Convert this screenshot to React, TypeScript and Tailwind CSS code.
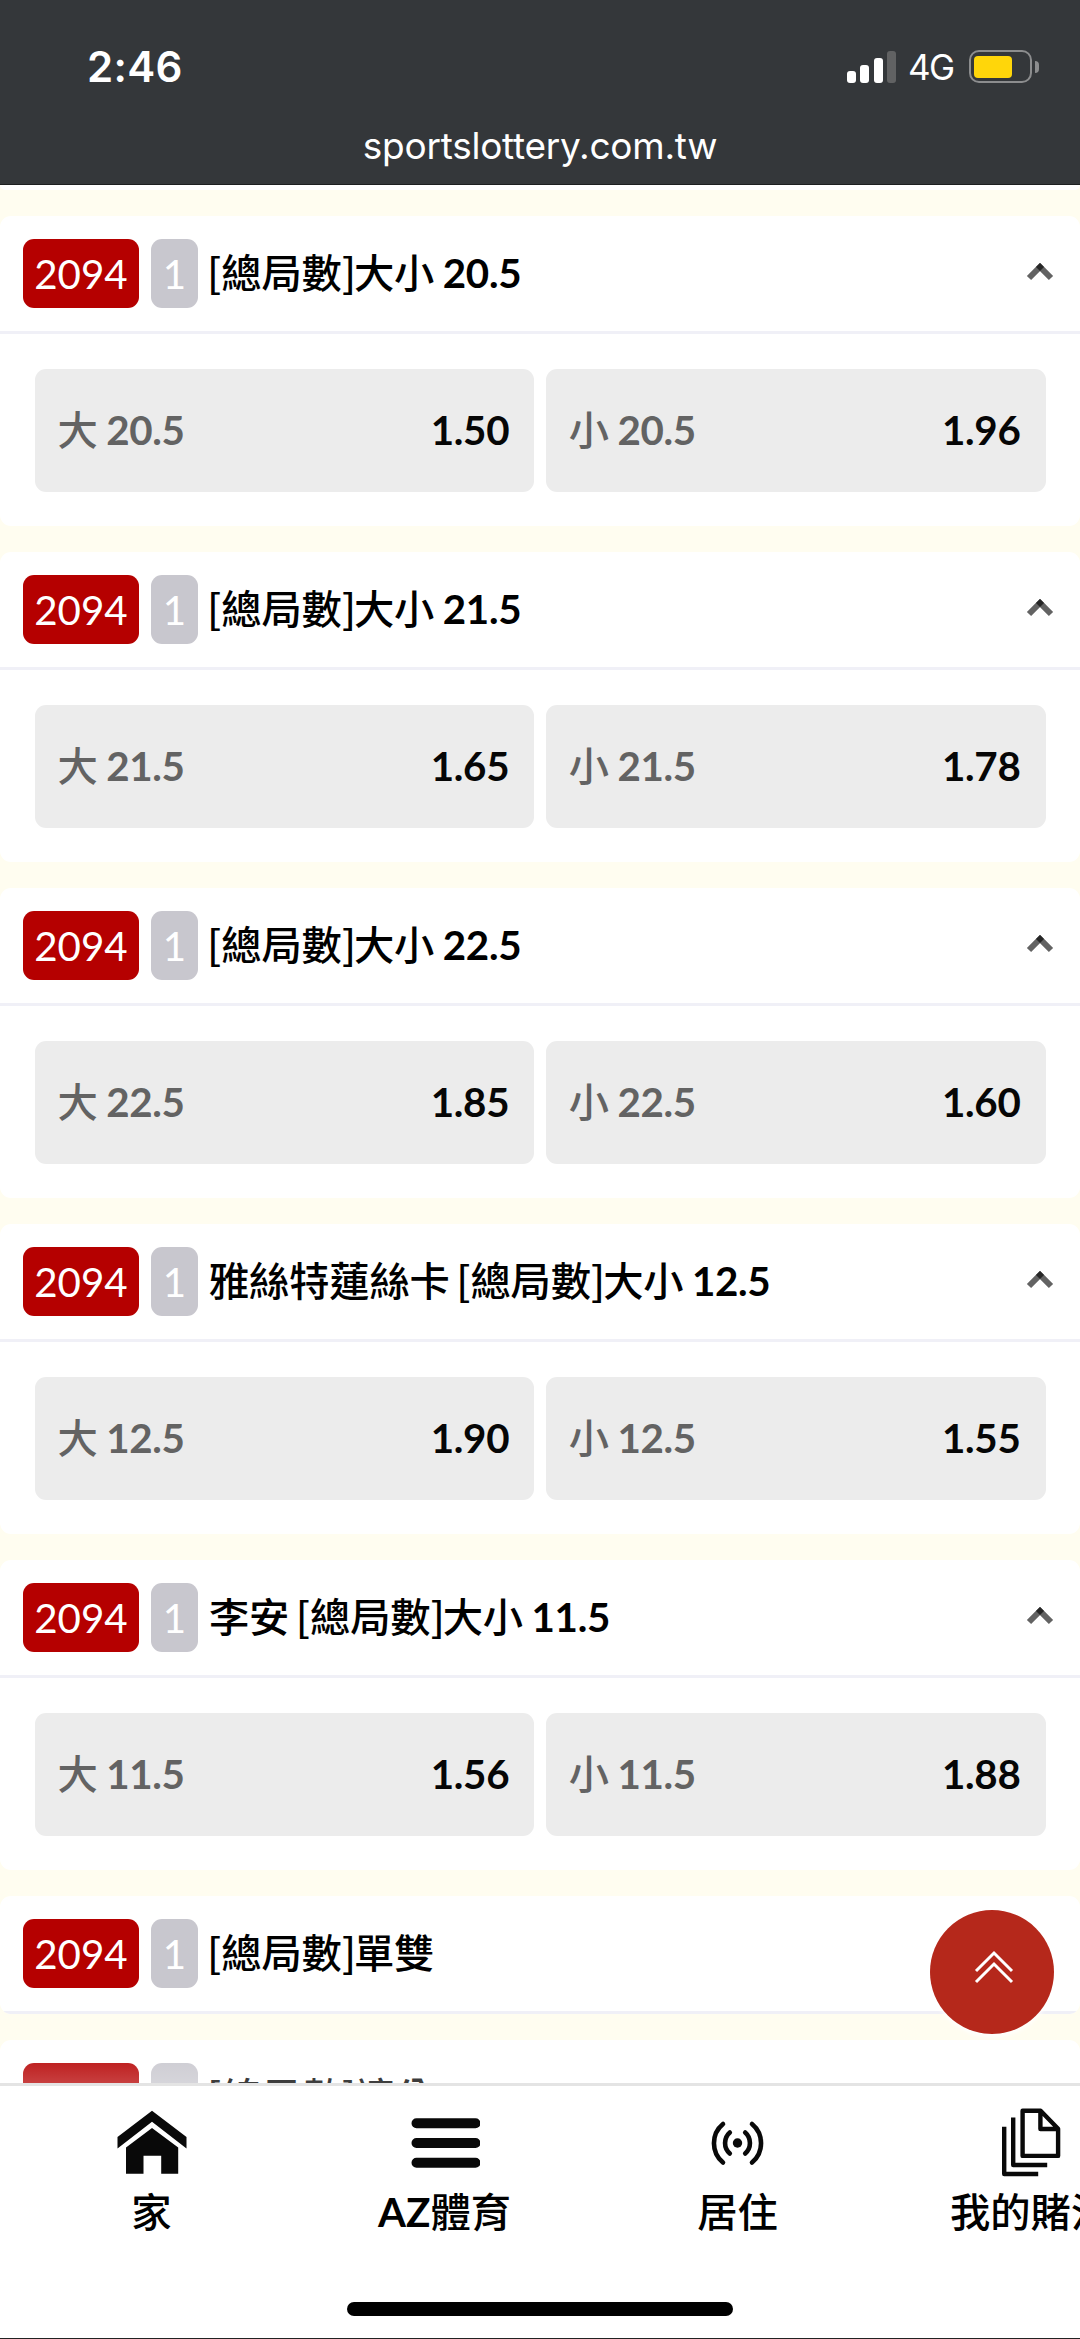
import React from "react";

const markets = [
  { title: "[總局數]大小 20.5", line: "20.5", over: "1.50", under: "1.96" },
  { title: "[總局數]大小 21.5", line: "21.5", over: "1.65", under: "1.78" },
  { title: "[總局數]大小 22.5", line: "22.5", over: "1.85", under: "1.60" },
  { title: "雅絲特蓮絲卡 [總局數]大小 12.5", line: "12.5", over: "1.90", under: "1.55" },
  { title: "李安 [總局數]大小 11.5", line: "11.5", over: "1.56", under: "1.88" },
];

function StatusBar() {
  return (
    <header className="flex h-[185px] shrink-0 flex-col border-b border-[#1d1f20] bg-[#34373a] font-['Inter','Liberation_Sans',sans-serif] text-white">
      <div className="flex h-[120px] items-center justify-between pt-[13px] pr-[41px] pl-[87px]">
        <span className="text-[42px] leading-none font-semibold tracking-[0.3px]">2:46</span>
        <div className="flex items-center">
          <div className="flex h-[32px] items-end gap-[4.5px]">
            <i className="h-[12px] w-[9px] rounded-[3px] bg-white" />
            <i className="h-[18px] w-[9px] rounded-[3px] bg-white" />
            <i className="h-[25px] w-[9px] rounded-[3px] bg-white" />
            <i className="h-[32px] w-[9px] rounded-[3px] bg-[#616263]" />
          </div>
          <span className="mt-[2px] ml-[12px] w-[47px] text-[35px] leading-none tracking-[-1.5px] whitespace-nowrap">4G</span>
          <div className="ml-[14px] flex h-[33px] w-[63px] items-center rounded-[10px] border-[2.5px] border-[#8c8d8e] px-[3px]">
            <i className="h-[22px] w-[38px] rounded-[4px] bg-[#ffd60a]" />
          </div>
          <i className="ml-[3px] h-[12px] w-[4px] rounded-r-full bg-[#8c8d8e]" />
        </div>
      </div>
      <div className="flex h-[50px] items-center justify-center text-[37px] leading-none tracking-[-0.25px]">sportslottery.com.tw</div>
    </header>
  );
}

function MarketHead({ title, chevron }: { title: string; chevron?: boolean }) {
  return (
    <div className="flex h-[118.5px] items-center border-b-3 border-[#f0f0f7] px-[23px]">
      <span className="flex h-[69px] w-[116px] items-center justify-center rounded-[11px] bg-[#b50000] pt-px text-white">2094</span>
      <span className="ml-3 flex h-[69px] w-[47px] items-center justify-center rounded-[11px] bg-[#c8c7ce] pt-px text-white">1</span>
      <span className="-mt-[3px] ml-[11px] whitespace-pre text-black">
        <Mixed text={title} />
      </span>
      {chevron && (
        <svg className="mt-[-3px] mr-[3px] ml-auto" width="28" height="18" viewBox="0 0 28 18" fill="none">
          <path d="M3 15 14 4l11 11" stroke="#636363" strokeWidth="6" />
          <path d="m14 0 4 4-4 4-4-4z" fill="#262626" />
        </svg>
      )}
    </div>
  );
}

/* Latin runs are bold Lato, Han runs medium; brackets and spaces are set tight. */
function Mixed({ text }: { text: string }) {
  return (
    <>
      {text.split(/([-\d.]+|[[\]]| )/).map((part, i) => {
        if (/[\d]/.test(part)) return <b key={i} className="font-bold tracking-[-0.3px]">{part}</b>;
        if (part === " ") return <span key={i} className="tracking-[-1.8px]"> </span>;
        if (part === "[") return <span key={i} className="-ml-[2px] font-['Noto_Sans_CJK_TC',sans-serif] font-medium">[</span>;
        if (part === "]") return <span key={i} className="-mr-[2px] font-['Noto_Sans_CJK_TC',sans-serif] font-medium">]</span>;
        return <span key={i} className="font-['Noto_Sans_CJK_TC',sans-serif] font-medium tracking-[-0.2px]">{part}</span>;
      })}
    </>
  );
}

function Odds({ side, line, price }: { side: string; line: string; price: string }) {
  return (
    <button className="flex h-[123px] flex-1 items-center justify-between rounded-[11px] bg-[#ececec] pr-[25px] pl-[23px] whitespace-pre">
      <span className="-mt-[2px] text-[#636363]">
        <Mixed text={side + " " + line} />
      </span>
      <b className="tracking-[-0.3px] text-[#060606]">{price}</b>
    </button>
  );
}

function NavItem({ label, icon }: { label: React.ReactNode; icon: React.ReactNode }) {
  return (
    <div className="flex w-[293px] shrink-0 flex-col items-center">
      <div className="flex h-[70px] w-[70px] items-center justify-center">{icon}</div>
      <span className="mt-[3px] h-[60px] font-['Lato','Noto_Sans_CJK_TC',sans-serif] leading-[60px] font-medium whitespace-nowrap text-black">
        {label}
      </span>
    </div>
  );
}

export default function App() {
  return (
    <div className="flex h-[2339px] w-[1080px] flex-col overflow-hidden bg-[#fffdf0] font-['Lato','Noto_Sans_CJK_TC',sans-serif] text-[40.3px] leading-none">
      <StatusBar />
      <main className="relative flex h-[1897.5px] shrink-0 flex-col gap-[26px] overflow-hidden">
        <div className="h-[4.5px] shrink-0 rounded-b-[11px] bg-white" />
        {markets.map((m) => (
          <section key={m.title} className="h-[310px] shrink-0 overflow-hidden rounded-[11px] bg-white">
            <MarketHead title={m.title} chevron />
            <div className="flex gap-[11.5px] px-[34.5px] pt-[35px]">
              <Odds side="大" line={m.line} price={m.over} />
              <Odds side="小" line={m.line} price={m.under} />
            </div>
          </section>
        ))}
        <section className="shrink-0 overflow-hidden rounded-[11px] bg-white">
          <MarketHead title="[總局數]單雙" />
        </section>
        <section className="shrink-0 overflow-hidden rounded-[11px] bg-white">
          <MarketHead title="[總局數]讓分 -1.5" />
        </section>
        <div className="absolute inset-x-0 bottom-0 h-[42px] bg-linear-to-b from-white/0 to-white/25" />
        <button className="absolute right-[26px] bottom-[49px] flex size-[124px] items-center justify-center rounded-full bg-[#b5281b] shadow-[0_3px_4px_rgba(255,255,255,0.9)]">
          <svg className="-mt-[10px] ml-[3px]" width="40" height="34" viewBox="0 0 40 34" fill="none" stroke="#fff" strokeWidth="3">
            <path d="m2 21 18-18 18 18M2 32l18-18 18 18" />
          </svg>
        </button>
      </main>
      <nav className="h-[256.5px] shrink-0 border-t-3 border-b border-t-[#e4e4e4] border-b-[#222] bg-white">
        <div className="flex pt-[23.5px] pl-[5px]">
          <NavItem
            label="家"
            icon={
              <svg width="70" height="70" viewBox="0 0 70 70" fill="#090909">
                <path d="M35 1.700 69.500 28v11.500L35 12.700.5 39.500V28z" />
                <path d="m35 19 26.200 19.500v26.200h-17v-18H26.500v18H9V38.500z" />
              </svg>
            }
          />
          <NavItem
            label={
              <>
                <b className="font-bold">AZ</b>體育
              </>
            }
            icon={
              <svg width="70" height="70" viewBox="0 0 70 70" stroke="#090909" strokeWidth="10" strokeLinecap="round">
                <path d="M6.500 14.300h59M6.500 34h59M6.500 53.700h59" />
              </svg>
            }
          />
          <NavItem
            label="居住"
            icon={
              <svg width="70" height="70" viewBox="0 0 70 70" fill="none" stroke="#090909" strokeWidth="4.600" strokeLinecap="round">
                <circle cx="34.500" cy="34" r="4.700" fill="#090909" stroke="none" />
                <path d="M20 15a25 25 0 0 0 0 38.500M49 15a25 25 0 0 1 0 38.500M26.800 23.500a14 14 0 0 0 0 21M42.200 23.500a14 14 0 0 1 0 21" />
              </svg>
            }
          />
          <NavItem
            label="我的賭注"
            icon={
              <svg className="overflow-visible" width="70" height="70" viewBox="0 0 70 70" fill="none" stroke="#090909" strokeWidth="4.400" strokeLinejoin="round">
                <path d="M26.600 1.800h18l17.500 18v27.100H26.600zM44.400 1.800V20h17.500M17.200 8.500V56h34M8.200 17.700V65h34" />
              </svg>
            }
          />
        </div>
        <div className="mx-auto mt-[59.5px] h-[14px] w-[386px] rounded-full bg-black" />
      </nav>
    </div>
  );
}
